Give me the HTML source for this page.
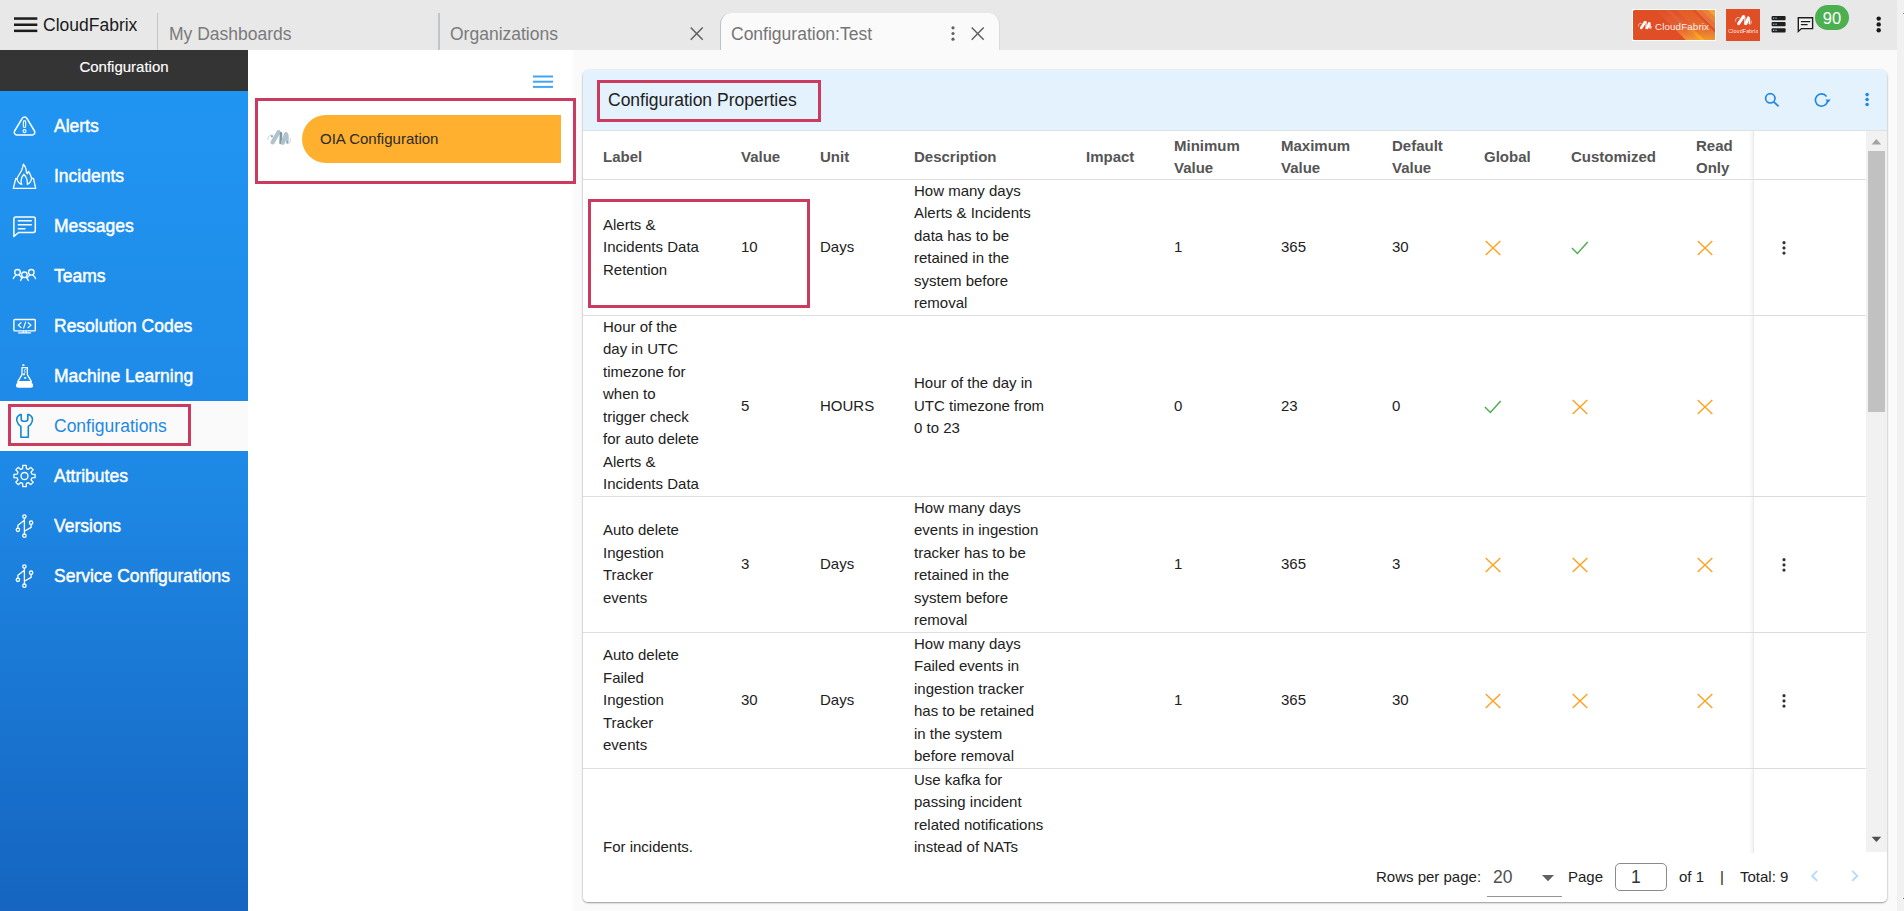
<!DOCTYPE html>
<html lang="en">
<head>
<meta charset="utf-8">
<title>Configuration:Test</title>
<style>
*{box-sizing:border-box;margin:0;padding:0}
html,body{width:1904px;height:911px;overflow:hidden;background:#fafafa;font-family:"Liberation Sans",sans-serif;color:#212121}
.abs{position:absolute}
#topbar{position:absolute;left:0;top:0;width:1897px;height:50px;background:#e8e8e8}
#rstrip{position:absolute;left:1897px;top:0;width:7px;height:911px;background:#f1f1f1}
#brand{position:absolute;left:43px;top:14px;font-size:17.5px;line-height:22px;color:#1a1a1a}
.tab{position:absolute;top:13px;height:37px;font-size:17.5px;color:#7a7a7a;line-height:20px;padding:11px 0 0 11px;border-left:1px solid #c4c8cc}
.tab.active{background:#fafafa;border-left:1px solid #bcc3c9;border-right:1px solid #dadada;border-radius:11px 11px 0 0;color:#757575;padding-left:10px}
#side{position:absolute;left:0;top:50px;width:248px;height:861px;background:linear-gradient(180deg,#2196f3 0%,#1e88e5 50%,#1565c0 100%)}
#sidehead{position:absolute;left:0;top:0;width:248px;height:41px;background:#343434;color:#fff;font-size:15px;line-height:18px;text-align:center;padding-top:8px;-webkit-text-stroke:0.15px #fff}
.mi{position:absolute;left:0;width:248px;height:50px;color:#fff;font-size:17.5px;line-height:50px;padding-left:54px;-webkit-text-stroke:0.45px #fff;white-space:nowrap}
.mi svg{position:absolute;left:0;top:0;width:50px;height:50px}
.mi.sel{background:#fafafa;color:#1e88e5;-webkit-text-stroke:0}
#mid{position:absolute;left:248px;top:50px;width:325px;height:861px;background:#fff}
.redbox{position:absolute;border:3px solid #cc3a60}
#card{position:absolute;left:583px;top:70px;width:1304px;height:832px;background:#fff;border-radius:6px 6px 5px 5px;box-shadow:0 1px 2px rgba(0,0,0,.38),0 0 2px rgba(0,0,0,.12);overflow:hidden}
#chead{position:absolute;left:0;top:0;width:1304px;height:60px;background:#e3f2fd}
#ctitle{position:absolute;left:25px;top:18px;font-size:17.5px;line-height:24px;color:#212121}
#grid{position:absolute;left:0;top:60px;width:1284px;height:723px;overflow:hidden}
table{border-collapse:separate;border-spacing:0;table-layout:fixed;width:1283px}
th,td{font-size:15px;line-height:22.5px;text-align:left;vertical-align:middle;padding:0 0 0 20px;white-space:nowrap;border-bottom:1px solid #dedede}
th{font-weight:bold;color:#555;height:50px}
th span{display:inline-block;position:relative;top:2.75px}
td{color:#212121}
.c{position:relative;top:-0.25px}
td.act,th.act{border-left:1px solid #e9e9e9;padding:0;box-shadow:-3px 0 3px -1px rgba(0,0,0,.055)}
.ic{display:block;width:18px;height:18px;margin-top:1px}
.kb{display:block;width:6px;height:16px;margin-left:27px;fill:#333}
#sb{position:absolute;left:1283px;top:60px;width:21px;height:722px;background:#f1f1f1}
#foot{position:absolute;left:0;top:783px;width:1304px;height:49px;background:#fff;font-size:15px;color:#212121}
#foot span{position:absolute;top:14px;line-height:20px;white-space:nowrap}
</style>
</head>
<body>
<div id="topbar">
  <svg class="abs" style="left:14px;top:17px" width="24" height="16" viewBox="0 0 24 16"><rect x="0" y="0.3" width="23.3" height="2.5" fill="#1c1c1c"/><rect x="0" y="6.5" width="23.3" height="2.5" fill="#1c1c1c"/><rect x="0" y="12.6" width="23.3" height="2.5" fill="#1c1c1c"/></svg>
  <div id="brand">CloudFabrix</div>
  <div class="tab" style="left:157px;width:281px">My Dashboards</div>
  <div class="tab" style="left:438px;width:282px;border-left:2px solid #bfc6cb;padding-left:10px">Organizations</div>
  <div class="tab active" style="left:720px;width:280px">Configuration:Test</div>

  <svg class="abs" style="left:688px;top:25px" width="18" height="18" viewBox="0 0 18 18"><path d="M2.7 2.4L14.7 14.8M14.7 2.4L2.7 14.8" stroke="#616161" stroke-width="1.5" fill="none"/></svg>
  <svg class="abs" style="left:969px;top:25px" width="18" height="18" viewBox="0 0 18 18"><path d="M2.7 2.4L14.7 14.8M14.7 2.4L2.7 14.8" stroke="#616161" stroke-width="1.5" fill="none"/></svg>
  <svg class="abs" style="left:950px;top:25px" width="6" height="18" viewBox="0 0 6 18"><circle cx="3" cy="2.8" r="1.6" fill="#616161"/><circle cx="3" cy="8.5" r="1.6" fill="#616161"/><circle cx="3" cy="14.2" r="1.6" fill="#616161"/></svg>
  <svg class="abs" style="left:1632px;top:9px" width="84" height="32" viewBox="0 0 84 32">
    <defs>
      <linearGradient id="gA" x1="0" y1="0" x2="0" y2="1"><stop offset="0" stop-color="#e8703a" stop-opacity="0.05"/><stop offset="0.55" stop-color="#e96f3e" stop-opacity="0.55"/><stop offset="1" stop-color="#f39a30" stop-opacity="1"/></linearGradient>
      <linearGradient id="gY" x1="0" y1="0" x2="0" y2="1"><stop offset="0.5" stop-color="#fbb010" stop-opacity="0"/><stop offset="1" stop-color="#fbb010" stop-opacity="1"/></linearGradient>
      <clipPath id="cp1"><rect x="1" y="1" width="82" height="30" rx="1.6"/></clipPath>
      <filter id="bl2" x="-10%" y="-10%" width="120%" height="120%"><feGaussianBlur stdDeviation="0.25"/></filter>
    </defs>
    <rect x="0" y="0" width="84" height="32" rx="0.8" fill="#fff"/>
    <rect x="1" y="1" width="82" height="30" rx="1.6" fill="#e04e26"/>
    <g clip-path="url(#cp1)">
      <path d="M23.8 1L60.4 1L90.4 31L53.8 31Z" fill="url(#gA)"/>
      <path d="M34 1L38 1L68 31L64 31Z" fill="#fff" opacity=".06"/>
      <path d="M38 1L42.5 1L72.5 31L68 31Z" fill="url(#gY)"/>
      <path d="M44.5 1L60.4 1L90.4 31L74.5 31Z" fill="#f09426" opacity=".18"/>
      <path d="M63.7 1L121 1L151 31L93.7 31Z" fill="#ec8238"/>
      <path d="M63.7 1L69.5 1L99.5 31L93.7 31Z" fill="#e8703c"/>
      <path d="M76 1L121 1L151 31L106 31Z" fill="#f3a438"/>
    </g>
    <g filter="url(#bl2)" stroke="#fff" fill="none" stroke-linecap="round"><path d="M6.4 17.2C6.2 15 7.8 13.8 9.2 14.4" stroke-width="0.7" opacity=".8"/><path d="M9.2 19L13.2 12.8" stroke-width="2.6"/><path d="M14.2 13.4L14 19.4" stroke-width="1.4" opacity=".75"/><path d="M15.2 19L17.2 14.2" stroke-width="2.5"/><path d="M18 15L18 19" stroke-width="1.4"/><path d="M18.8 19.8C19.4 19.2 19.6 18.4 19.6 17.4" stroke-width="0.6" opacity=".8"/></g>
    <text x="23" y="20.5" font-family="'Liberation Sans',sans-serif" font-size="9.8" fill="#fff" fill-opacity=".93" textLength="54" lengthAdjust="spacing">CloudFabrix</text>
  </svg>
  <svg class="abs" style="left:1726px;top:9px" width="34" height="32" viewBox="0 0 34 32">
    <rect width="34" height="32" fill="#e04e26"/>
    <g filter="url(#bl2)" stroke="#fff" fill="none" stroke-linecap="round"><path d="M9.6 12.2C9.2 9.4 11.4 7.8 13.2 8.6" stroke-width="0.8" opacity=".85"/><path d="M12.6 14.6L17.6 7.4" stroke-width="3"/><path d="M18.9 8.4L18.7 15" stroke-width="1.5" opacity=".7"/><path d="M19.9 14.6L22.4 8.8" stroke-width="2.9"/><path d="M23.4 9.8L23.4 14.6" stroke-width="1.6"/><path d="M24.4 15.4C25.2 14.6 25.5 13.6 25.4 12.2" stroke-width="0.7" opacity=".8"/></g>
    <text x="2.2" y="23.7" font-family="'Liberation Sans',sans-serif" font-size="5.4" fill="#fff" textLength="30" lengthAdjust="spacing" opacity=".9">CloudFabrix</text>
  </svg>
  <svg class="abs" style="left:1771px;top:15px" width="16" height="19" viewBox="0 0 16 19"><g fill="#1f1f1f"><rect x="0.6" y="1" width="14" height="4.2" rx="1"/><rect x="0.6" y="7.1" width="14" height="4.2" rx="1"/><rect x="0.6" y="13.2" width="14" height="4.2" rx="1"/></g><g fill="#9fc4e8"><rect x="2" y="2.5" width="1.3" height="1.2"/><rect x="4.4" y="2.5" width="1.3" height="1.2"/><rect x="2" y="8.6" width="1.3" height="1.2"/><rect x="4.4" y="8.6" width="1.3" height="1.2"/><rect x="2" y="14.7" width="1.3" height="1.2"/><rect x="4.4" y="14.7" width="1.3" height="1.2"/></g></svg>
  <svg class="abs" style="left:1796px;top:15px" width="20" height="19" viewBox="0 0 20 19"><path d="M2.3 2.7H16.6V13.6H5.4L2.3 16.5Z" fill="#f2f2f2" stroke="#1f1f1f" stroke-width="1.4" stroke-linejoin="miter"/><path d="M4.9 6.7H14.2M4.9 9.6H11.6" stroke="#1f1f1f" stroke-width="1.3"/></svg>
  <div class="abs" style="left:1815px;top:5px;width:34px;height:25px;border-radius:12.5px;background:#4caf50;color:#fff;font-size:16.5px;line-height:26px;text-align:center">90</div>
  <svg class="abs" style="left:1875px;top:15px" width="8" height="19" viewBox="0 0 8 19"><circle cx="3.7" cy="3.6" r="2.2" fill="#1a1a1a"/><circle cx="3.7" cy="9.4" r="2.2" fill="#1a1a1a"/><circle cx="3.7" cy="15.2" r="2.2" fill="#1a1a1a"/></svg>
</div>
<div id="rstrip"><div class="abs" style="left:6px;top:13px;width:1px;height:1px;background:#8a8a8a"></div><div class="abs" style="left:6px;top:898px;width:1px;height:1px;background:#707070"></div></div>

<div id="side">
  <div id="sidehead">Configuration</div>
  <div class="mi" style="top:51px"><svg viewBox="0 0 50 50"><g fill="none" stroke="#fff" stroke-width="1.3" stroke-linejoin="round" stroke-linecap="round"><path d="M22.2 17.4L14.6 30A2.6 2.6 0 0 0 16.9 33.9L32.2 33.9A2.6 2.6 0 0 0 34.5 30L26.9 17.4A2.7 2.7 0 0 0 22.2 17.4Z" stroke-width="1.5"/><rect x="23.35" y="19.9" width="2.3" height="6.5" rx="0.9" stroke-width="1.1"/><circle cx="24.5" cy="30.1" r="1.5" stroke-width="1.1"/></g></svg>Alerts</div>
  <div class="mi" style="top:101px"><svg viewBox="0 0 50 50"><g fill="none" stroke="#fff" stroke-width="1.3" stroke-linejoin="round" stroke-linecap="round" stroke-width="1.4"><path d="M21.7 33.4C19.5 32.8 17.6 30.5 16.9 27.8C18 25 20 22.5 21.2 20.3C22.4 18 22.9 15.5 23.4 13.2C25.2 15 26.3 18 26.5 21.6L27.2 22.7C27.6 22 28 21.2 28.5 20.5C30 22.5 31.2 25 31.6 27.3C31.4 29.5 29.8 32.2 27.4 33.4C27.9 30.5 27.2 28 25.6 25.5L23.9 23.3C22.4 25 21.3 27.5 21 29.8C21 31.2 21.3 32.5 21.7 33.4Z"/><path d="M16.9 27.9L15.8 27.5L13.3 37.4L35.7 37.4L33.5 27.5L31.6 27.4"/></g></svg>Incidents</div>
  <div class="mi" style="top:151px"><svg viewBox="0 0 50 50"><g fill="none" stroke="#fff" stroke-width="1.3" stroke-linejoin="round" stroke-linecap="round"><path d="M15.8 15.9H33.4Q35.3 15.9 35.3 17.8V29.6Q35.3 31.5 33.4 31.5H18.6L13.9 35.4V17.8Q13.9 15.9 15.8 15.9Z" stroke-width="1.5"/><path d="M17.8 19.7H31.8M17.8 23.7H31.8M17.8 27.7H25.4" stroke-width="1.4" stroke-linecap="butt"/></g></svg>Messages</div>
  <div class="mi" style="top:201px"><svg viewBox="0 0 50 50"><g fill="none" stroke="#fff" stroke-width="1.3" stroke-linejoin="round" stroke-linecap="round" stroke-width="1.05"><circle cx="17.5" cy="21.3" r="2.8"/><circle cx="24.4" cy="23.8" r="2.8"/><circle cx="31.3" cy="21.3" r="2.8"/><path d="M13.3 27.6C14 25.8 15 24.9 16 24.3M19.2 24.3C20 24.8 20.8 25.6 21.3 26.4M20.6 29.5C21 28.3 21.6 27.4 22.4 26.7M26.4 26.7C27.2 27.4 27.9 28.3 28.4 29.5M27.6 26.4C28.1 25.6 28.8 24.8 29.7 24.3M32.9 24.3C34 24.9 35 25.9 35.6 27.7"/></g></svg>Teams</div>
  <div class="mi" style="top:251px"><svg viewBox="0 0 50 50"><g fill="none" stroke="#fff" stroke-width="1.3" stroke-linejoin="round" stroke-linecap="round"><rect x="13.9" y="18.5" width="21.4" height="11.4" rx="0.8" stroke-width="1.4"/><path d="M23.2 30V31.5M26 30V31.5M18.6 31.9H30.6" stroke-width="1.1"/><path d="M21 21.7L18.2 24.1L21 26.5M28.2 21.7L31 24.1L28.2 26.5M25.6 21.1L23.6 27.1" stroke-width="1.2"/></g></svg>Resolution Codes</div>
  <div class="mi" style="top:301px"><svg viewBox="0 0 50 50"><rect x="22.3" y="13.2" width="2.2" height="1.8" rx="0.5" fill="#fff"/><g fill="none" stroke="#fff" stroke-width="1.3" stroke-linejoin="round" stroke-linecap="round" stroke-width="1.1"><path d="M22 16.6H27.3V23.6L31.4 30.6M17.8 30.6L22 23.6V16.6"/><path d="M25.9 18.2C24 18 23.8 20.4 25.2 20.6C25.4 21.4 25 22 24.4 22.2" stroke-width="1"/></g><path d="M18.2 29.9H30.9L32.8 33.2Q34 36.7 30.4 36.7H18.7Q15.1 36.7 16.3 33.2Z" fill="#fff"/><rect x="22.9" y="22.4" width="2" height="1.9" rx="0.4" fill="#fff"/><rect x="24.2" y="25.9" width="2" height="1.9" rx="0.4" fill="#fff"/></svg>Machine Learning</div>
  <div class="mi sel" style="top:351px"><svg viewBox="0 0 50 50"><path d="M20.4 13.5C17.6 14.8 16.2 17.6 17 20.4C17.5 22.4 19 24.2 20.9 25.4V36.3H28.3V25.4C30.2 24.2 31.7 22.4 32.2 20.4C33 17.6 31.6 14.8 28.8 13.5L27.8 13.5V18Q27.8 20.2 25.6 20.2H23.4Q21.2 20.2 21.2 18V13.5Z" fill="none" stroke="#1488d2" stroke-width="1.6" stroke-linejoin="round"/></svg>Configurations</div>
  <div class="mi" style="top:401px"><svg viewBox="0 0 50 50"><g fill="none" stroke="#fff" stroke-width="1.3" stroke-linejoin="round" stroke-linecap="round" stroke-width="1.5"><path d="M22.55 17.65 L22.83 14.43 L26.17 14.43 L26.45 17.65 L28.32 18.43 L30.79 16.34 L33.16 18.71 L31.07 21.18 L31.85 23.05 L35.07 23.33 L35.07 26.67 L31.85 26.95 L31.07 28.82 L33.16 31.29 L30.79 33.66 L28.32 31.57 L26.45 32.35 L26.17 35.57 L22.83 35.57 L22.55 32.35 L20.68 31.57 L18.21 33.66 L15.84 31.29 L17.93 28.82 L17.15 26.95 L13.93 26.67 L13.93 23.33 L17.15 23.05 L17.93 21.18 L15.84 18.71 L18.21 16.34 L20.68 18.43Z"/><circle cx="24.5" cy="25" r="3.5"/></g></svg>Attributes</div>
  <div class="mi" style="top:451px"><svg viewBox="0 0 50 50"><g fill="none" stroke="#fff" stroke-width="1.3" stroke-linejoin="round" stroke-linecap="round" stroke-width="1.3"><circle cx="24.4" cy="15.5" r="1.7"/><circle cx="24.4" cy="34.7" r="1.7"/><circle cx="17.9" cy="28.8" r="1.7"/><circle cx="31.1" cy="21.7" r="1.7"/><path d="M24.4 17.3V32.9M24.4 19.2L17.9 24.2V27M31.1 23.5V26.4L24.4 30.3"/></g></svg>Versions</div>
  <div class="mi" style="top:501px"><svg viewBox="0 0 50 50"><g fill="none" stroke="#fff" stroke-width="1.3" stroke-linejoin="round" stroke-linecap="round" stroke-width="1.3"><circle cx="24.4" cy="15.5" r="1.7"/><circle cx="24.4" cy="34.7" r="1.7"/><circle cx="17.9" cy="28.8" r="1.7"/><circle cx="31.1" cy="21.7" r="1.7"/><path d="M24.4 17.3V32.9M24.4 19.2L17.9 24.2V27M31.1 23.5V26.4L24.4 30.3"/></g></svg>Service Configurations</div>
</div>

<div id="mid">

  <svg class="abs" style="left:18px;top:78px" width="27" height="19" viewBox="0 0 27 19"><defs><filter id="bl" x="-10%" y="-10%" width="120%" height="120%"><feGaussianBlur stdDeviation="0.3"/></filter></defs><g filter="url(#bl)" fill="none" stroke-linecap="round"><path d="M1.8 11.6C1.8 8.4 4.2 6.2 6.8 7.2" stroke="#c3d0d8" stroke-width="1"/><circle cx="5.9" cy="8.3" r="1.1" fill="#8ea5b3"/><path d="M6.6 14.4L12.6 4" stroke="#b2c2cc" stroke-width="4.2"/><path d="M15 5.4L14.6 15" stroke="#7e98a8" stroke-width="2.6"/><path d="M16.8 14.8L20 6.2" stroke="#b2c2cc" stroke-width="4.2"/><path d="M21.3 7.4L21.3 14.6" stroke="#b2c2cc" stroke-width="2.8"/><path d="M21.4 15.8L20.6 13.6L22 13Z" fill="#7e98a8"/><path d="M22.4 16C23.8 14.8 24.5 13 24.4 10.4" stroke="#c9d5dc" stroke-width="0.9"/></g></svg>
  <svg class="abs" style="left:285px;top:25px" width="20" height="14" viewBox="0 0 20 14"><rect x="0" y="0.5" width="20" height="2" fill="#42a5f5"/><rect x="0" y="5.7" width="20" height="2" fill="#42a5f5"/><rect x="0" y="10.9" width="20" height="2" fill="#42a5f5"/></svg>
  <div class="abs" style="left:54px;top:65px;width:259px;height:48px;background:#ffb02e;border-radius:24px 0 0 24px;font-size:15px;line-height:48px;padding-left:18px;color:#2b2b2b">OIA Configuration</div>
</div>
<div class="redbox" style="left:255px;top:98px;width:321px;height:86px"></div>
<div class="redbox" style="left:8px;top:404px;width:183px;height:42px"></div>

<div id="card">
  <div id="chead"><div id="ctitle">Configuration Properties</div>
    <svg class="abs" style="left:1180px;top:21px" width="18" height="18" viewBox="0 0 18 18"><circle cx="7.3" cy="7.3" r="4.7" fill="none" stroke="#1e88e5" stroke-width="1.7"/><path d="M10.8 10.8L15.6 15.4" stroke="#1e88e5" stroke-width="1.8"/></svg>
    <svg class="abs" style="left:1230px;top:21px" width="20" height="18" viewBox="0 0 20 18"><path d="M13.5 5.5A6.1 6.1 0 1 0 14.6 9.4" fill="none" stroke="#1e88e5" stroke-width="1.6"/><path d="M12.5 8.6L17.7 8.6L15.1 11.8Z" fill="#1e88e5"/></svg>
    <svg class="abs" style="left:1281px;top:22px" width="6" height="16" viewBox="0 0 6 16"><circle cx="3.1" cy="2.6" r="1.8" fill="#1e88e5"/><circle cx="3.1" cy="7.5" r="1.8" fill="#1e88e5"/><circle cx="3.1" cy="12.5" r="1.8" fill="#1e88e5"/></svg>
  </div>
  <div id="grid">
  <table>
    <colgroup><col style="width:138px"><col style="width:79px"><col style="width:94px"><col style="width:172px"><col style="width:88px"><col style="width:107px"><col style="width:111px"><col style="width:92px"><col style="width:87px"><col style="width:125px"><col style="width:77px"><col style="width:113px"></colgroup>
    <tr><th><span>Label</span></th><th><span>Value</span></th><th><span>Unit</span></th><th><span>Description</span></th><th><span>Impact</span></th><th><span>Minimum<br>Value</span></th><th><span>Maximum<br>Value</span></th><th><span>Default<br>Value</span></th><th><span>Global</span></th><th><span>Customized</span></th><th><span>Read<br>Only</span></th><th class="act"></th></tr>
    <tr><td><div class="c">Alerts &amp;<br>Incidents Data<br>Retention</div></td><td>10</td><td>Days</td><td><div class="c">How many days<br>Alerts &amp; Incidents<br>data has to be<br>retained in the<br>system before<br>removal</div></td><td></td><td>1</td><td>365</td><td>30</td><td><svg class="ic" viewBox="0 0 18 18"><path d="M1.7 2L16.3 16M16.3 2L1.7 16" stroke="#ffa01e" stroke-width="1.4" fill="none"/></svg></td><td><svg class="ic" viewBox="0 0 18 18"><path d="M0.9 9L6.4 14.5L16.7 3" stroke="#4caf50" stroke-width="1.5" fill="none"/></svg></td><td><svg class="ic" viewBox="0 0 18 18"><path d="M1.7 2L16.3 16M16.3 2L1.7 16" stroke="#ffa01e" stroke-width="1.4" fill="none"/></svg></td><td class="act"><svg class="kb" viewBox="0 0 6 16"><circle cx="3" cy="2.7" r="1.6"/><circle cx="3" cy="7.9" r="1.6"/><circle cx="3" cy="13.1" r="1.6"/></svg></td></tr>
    <tr><td><div class="c">Hour of the<br>day in UTC<br>timezone for<br>when to<br>trigger check<br>for auto delete<br>Alerts &amp;<br>Incidents Data</div></td><td>5</td><td>HOURS</td><td><div class="c">Hour of the day in<br>UTC timezone from<br>0 to 23</div></td><td></td><td>0</td><td>23</td><td>0</td><td><svg class="ic" viewBox="0 0 18 18"><path d="M0.9 9L6.4 14.5L16.7 3" stroke="#4caf50" stroke-width="1.5" fill="none"/></svg></td><td><svg class="ic" viewBox="0 0 18 18"><path d="M1.7 2L16.3 16M16.3 2L1.7 16" stroke="#ffa01e" stroke-width="1.4" fill="none"/></svg></td><td><svg class="ic" viewBox="0 0 18 18"><path d="M1.7 2L16.3 16M16.3 2L1.7 16" stroke="#ffa01e" stroke-width="1.4" fill="none"/></svg></td><td class="act"></td></tr>
    <tr><td><div class="c">Auto delete<br>Ingestion<br>Tracker<br>events</div></td><td>3</td><td>Days</td><td><div class="c">How many days<br>events in ingestion<br>tracker has to be<br>retained in the<br>system before<br>removal</div></td><td></td><td>1</td><td>365</td><td>3</td><td><svg class="ic" viewBox="0 0 18 18"><path d="M1.7 2L16.3 16M16.3 2L1.7 16" stroke="#ffa01e" stroke-width="1.4" fill="none"/></svg></td><td><svg class="ic" viewBox="0 0 18 18"><path d="M1.7 2L16.3 16M16.3 2L1.7 16" stroke="#ffa01e" stroke-width="1.4" fill="none"/></svg></td><td><svg class="ic" viewBox="0 0 18 18"><path d="M1.7 2L16.3 16M16.3 2L1.7 16" stroke="#ffa01e" stroke-width="1.4" fill="none"/></svg></td><td class="act"><svg class="kb" viewBox="0 0 6 16"><circle cx="3" cy="2.7" r="1.6"/><circle cx="3" cy="7.9" r="1.6"/><circle cx="3" cy="13.1" r="1.6"/></svg></td></tr>
    <tr><td><div class="c">Auto delete<br>Failed<br>Ingestion<br>Tracker<br>events</div></td><td>30</td><td>Days</td><td><div class="c">How many days<br>Failed events in<br>ingestion tracker<br>has to be retained<br>in the system<br>before removal</div></td><td></td><td>1</td><td>365</td><td>30</td><td><svg class="ic" viewBox="0 0 18 18"><path d="M1.7 2L16.3 16M16.3 2L1.7 16" stroke="#ffa01e" stroke-width="1.4" fill="none"/></svg></td><td><svg class="ic" viewBox="0 0 18 18"><path d="M1.7 2L16.3 16M16.3 2L1.7 16" stroke="#ffa01e" stroke-width="1.4" fill="none"/></svg></td><td><svg class="ic" viewBox="0 0 18 18"><path d="M1.7 2L16.3 16M16.3 2L1.7 16" stroke="#ffa01e" stroke-width="1.4" fill="none"/></svg></td><td class="act"><svg class="kb" viewBox="0 0 6 16"><circle cx="3" cy="2.7" r="1.6"/><circle cx="3" cy="7.9" r="1.6"/><circle cx="3" cy="13.1" r="1.6"/></svg></td></tr>
    <tr><td><div class="c">For incidents.</div></td><td></td><td></td><td><div class="c">Use kafka for<br>passing incident<br>related notifications<br>instead of NATs<br>messaging<br>between the<br>services</div></td><td></td><td></td><td></td><td></td><td></td><td></td><td></td><td class="act"></td></tr>
  </table>
  </div>
  <div class="abs" style="left:0;top:60px;width:1304px;height:1px;background:#dde2e7;z-index:3"></div>
  <div id="sb"><svg class="abs" style="left:5px;top:8px" width="11" height="7" viewBox="0 0 11 7"><path d="M0.6 6.4L5.4 1L10.2 6.4Z" fill="#a3a3a3"/></svg><div class="abs" style="left:2px;top:21px;width:17px;height:261px;background:#c1c1c1"></div><svg class="abs" style="left:5px;top:706px" width="11" height="7" viewBox="0 0 11 7"><path d="M0.6 0.8L10.2 0.8L5.4 6Z" fill="#505050"/></svg></div>
  <div id="foot">
    <span style="left:793px">Rows per page:</span>
    <span style="left:910px;font-size:17.5px;color:#4f4f4f;top:14px">20</span>
    <div class="abs" style="left:904px;top:43px;width:75px;height:1px;background:#949494"></div>
    <svg class="abs" style="left:958px;top:21px" width="14" height="8" viewBox="0 0 14 8"><path d="M1 1L13 1L7 7.2Z" fill="#616161"/></svg>
    <span style="left:985px">Page</span>
    <div class="abs" style="left:1032px;top:10px;width:52px;height:28px;border:1px solid #8a8a8a;border-radius:5px"></div>
    <span style="left:1048px;font-size:17.5px;top:14px;color:#333">1</span>
    <span style="left:1096px">of 1</span>
    <span style="left:1137px">|</span>
    <span style="left:1157px">Total: 9</span>
    <svg class="abs" style="left:1227px;top:15.7px" width="10" height="14" viewBox="0 0 10 14"><path d="M7.2 1.9L2.2 6.9L7.2 11.9" fill="none" stroke="#b4d9fa" stroke-width="1.8"/></svg>
    <svg class="abs" style="left:1267px;top:15.7px" width="10" height="14" viewBox="0 0 10 14"><path d="M2.2 1.9L7.2 6.9L2.2 11.9" fill="none" stroke="#b4d9fa" stroke-width="1.8"/></svg>
  </div>
</div>
<div class="redbox" style="left:597px;top:80px;width:224px;height:42px"></div>
<div class="redbox" style="left:588px;top:199px;width:222px;height:109px"></div>
</body>
</html>
